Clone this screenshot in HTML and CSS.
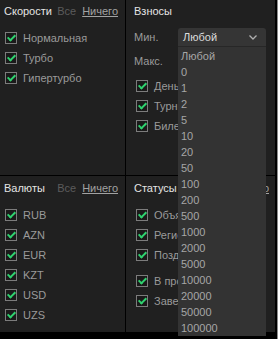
FILE: index.html
```html
<!DOCTYPE html>
<html lang="ru">
<head>
    <meta charset="UTF-8">
    <title>Фильтры</title>
    <link rel="stylesheet" href="styles.css">
</head>
<body>
    <div class="page">
        <div class="filters">
            <!-- Скорости -->
            <div class="panel panel-left">
                <div class="panel-head">
                    <span class="panel-title">Скорости</span>
                    <span class="links"><span class="link-all">Все</span><span class="link-none">Ничего</span></span>
                </div>
                <div class="check-row"><span class="box"></span>Нормальная</div>
                <div class="check-row"><span class="box"></span>Турбо</div>
                <div class="check-row"><span class="box"></span>Гипертурбо</div>
            </div>

            <!-- Взносы -->
            <div class="panel panel-right">
                <div class="panel-head">
                    <span class="panel-title">Взносы</span>
                </div>
                <div class="field-row">
                    <span class="field-label">Мин.</span>
                    <div class="select-wrap">
                        <div class="select open">
                            <span>Любой</span>
                            <svg class="chevron" width="8" height="5" viewBox="0 0 8 5"><path d="M0.5 0.5 L4 4 L7.5 0.5" fill="none" stroke="#b0b0b0" stroke-width="1.3"/></svg>
                        </div>
                        <ul class="options">
                            <li>Любой</li>
                            <li>0</li>
                            <li>1</li>
                            <li>2</li>
                            <li>5</li>
                            <li>10</li>
                            <li>20</li>
                            <li>50</li>
                            <li>100</li>
                            <li>200</li>
                            <li>500</li>
                            <li>1000</li>
                            <li>2000</li>
                            <li>5000</li>
                            <li>10000</li>
                            <li>20000</li>
                            <li>50000</li>
                            <li>100000</li>
                        </ul>
                    </div>
                </div>
                <div class="field-row">
                    <span class="field-label">Макс.</span>
                </div>
                <div class="check-row"><span class="box"></span>Деньги</div>
                <div class="check-row"><span class="box"></span>Турниры</div>
                <div class="check-row"><span class="box"></span>Билеты</div>
            </div>

            <!-- Валюты -->
            <div class="panel panel-left panel-bottom">
                <div class="panel-head">
                    <span class="panel-title">Валюты</span>
                    <span class="links"><span class="link-all">Все</span><span class="link-none">Ничего</span></span>
                </div>
                <div class="check-row"><span class="box"></span>RUB</div>
                <div class="check-row"><span class="box"></span>AZN</div>
                <div class="check-row"><span class="box"></span>EUR</div>
                <div class="check-row"><span class="box"></span>KZT</div>
                <div class="check-row"><span class="box"></span>USD</div>
                <div class="check-row"><span class="box"></span>UZS</div>
            </div>

            <!-- Статусы -->
            <div class="panel panel-right panel-bottom">
                <div class="panel-head">
                    <span class="panel-title">Статусы</span>
                    <span class="links"><span class="link-all">Все</span><span class="link-none">Ничего</span></span>
                </div>
                <div class="check-row"><span class="box"></span>Объявлен</div>
                <div class="check-row"><span class="box"></span>Регистрация</div>
                <div class="check-row group-end"><span class="box"></span>Поздняя рег.</div>
                <div class="check-row"><span class="box"></span>В процессе</div>
                <div class="check-row"><span class="box"></span>Завершён</div>
            </div>
        </div>
        <div class="edge"></div>
    </div>
</body>
</html>
```

FILE: styles.css
```css
body {
    margin: 0;
    background: #000000;
    font-family: "Liberation Sans", Arial, sans-serif;
    font-size: 11px;
    color: #9a9a9a;
}

.page {
    display: flex;
    height: 339px;
}

.filters {
    display: grid;
    grid-template-columns: 125px 149px;
    grid-template-rows: 175px 156px;
    gap: 1px;
    width: 275px;
    align-self: flex-start;
    background: #000000;
}

.edge {
    width: 1px;
    margin-left: 2px;
    background: #8c8c8c;
}

.panel {
    background: #202020;
    box-sizing: border-box;
    overflow: visible;
}

.panel-left {
    padding: 0 7px 0 4px;
}

.panel-right {
    padding: 0 6px 0 8px;
}

.panel-bottom {
    padding-top: 1px;
}

.panel-head {
    display: flex;
    justify-content: space-between;
    align-items: center;
    height: 22px;
    margin-bottom: 6px;
}

.panel-title {
    color: #e4e4e4;
}

.links {
    display: flex;
    gap: 6px;
}

.link-all {
    color: #5c5c5c;
}

.link-none {
    color: #a2a2a2;
    text-decoration: underline;
}

.check-row {
    display: flex;
    align-items: center;
    gap: 6px;
    height: 20px;
    padding-left: 1px;
    white-space: nowrap;
}

.panel-right .check-row {
    padding-left: 2px;
}

.check-row.group-end {
    margin-bottom: 6px;
}

.box {
    display: flex;
    align-items: center;
    justify-content: center;
    width: 12px;
    height: 12px;
    box-sizing: border-box;
    border: 1px solid #7c7c7c;
    background: #1a1a1a;
    flex-shrink: 0;
}

.box::after {
    content: '';
    width: 3px;
    height: 6px;
    margin-top: -2px;
    border-right: 2px solid #2fd36f;
    border-bottom: 2px solid #2fd36f;
    transform: rotate(45deg);
}

.field-row {
    display: flex;
    align-items: center;
    height: 18px;
    margin-bottom: 6px;
}

.field-label {
    width: 44px;
    color: #9a9a9a;
}

.select-wrap {
    position: relative;
    z-index: 5;
}

.select {
    display: flex;
    align-items: center;
    justify-content: space-between;
    width: 88px;
    height: 18px;
    box-sizing: border-box;
    padding: 0 9px 0 5px;
    background: #353535;
    border-radius: 3px 3px 0 0;
    color: #dcdcdc;
}

.chevron {
    display: block;
}

.options {
    position: absolute;
    top: 18px;
    left: 0;
    width: 88px;
    margin: 0;
    padding: 1px 0 0 0;
    list-style: none;
    background: #333333;
    border-top: 1px solid #272727;
}

.options li {
    height: 16px;
    line-height: 16px;
    padding-left: 3px;
    color: #a6a6a6;
}
```
